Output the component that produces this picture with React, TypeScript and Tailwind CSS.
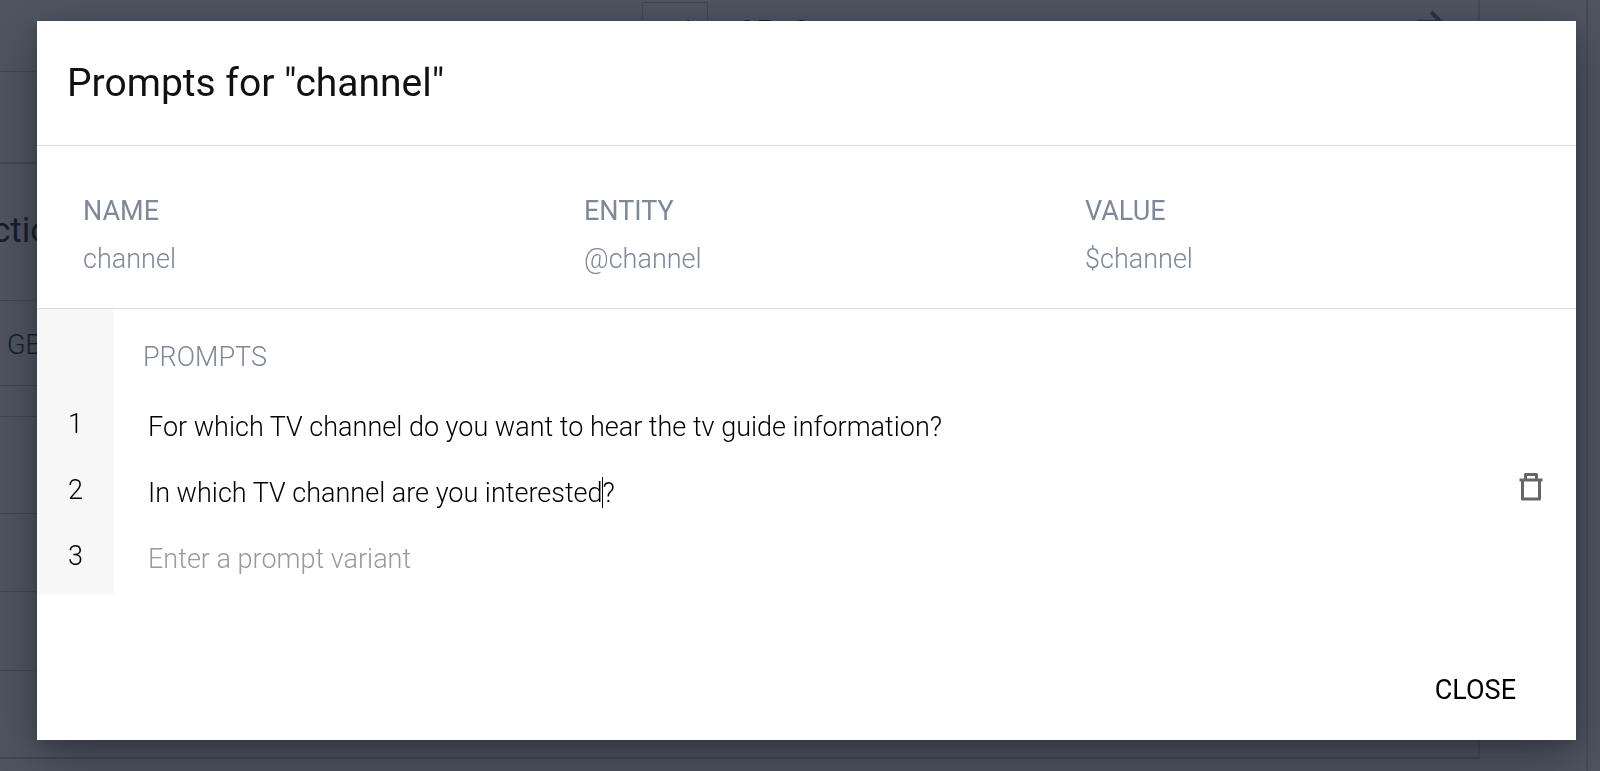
import { useState } from "react";

const details = [
  { label: "NAME", value: "channel" },
  { label: "ENTITY", value: "@channel" },
  { label: "VALUE", value: "$channel" },
];

function PageBehind() {
  return (
    <div aria-hidden="true" className="flex h-screen overflow-hidden bg-[#505661] text-[27px] leading-8 text-[#151d2e]">
      <div className="min-w-0 flex-1">
        <div className="border-r-2 border-[#464c57]">
          <div className="flex h-[72px] items-start border-b border-[#424853] pl-[30px]">
            <div className="flex flex-1 items-start justify-end">
              <div className="mt-[2px] h-[54px] w-[66px] border border-[#424853] pt-3 pr-3 text-right font-light">1</div>
            </div>
            <div className="flex flex-1 items-start pt-[15px] pl-[30px] font-light">
              <span className="flex gap-[22px]">
                <span>OF</span>
                <span>3</span>
              </span>
            </div>
            <div className="w-[62px] pt-2">
              <svg viewBox="0 0 30 26" className="h-[26px] w-[30px]" fill="none" stroke="#2c3542" strokeWidth="4">
                <path d="M1 14H27M15 4L25 14L15 24" />
              </svg>
            </div>
          </div>
          <div className="h-[92px] border-b-2 border-[#424853]" />
          <div className="flex h-[137px] items-center border-b border-[#424853] pb-[2px]">
            <span className="-ml-2 text-[35px] leading-10">ction</span>
          </div>
          <div className="flex h-[85px] items-center border-b border-[#424853] px-[7px] pt-1 font-light">GE</div>
          <div className="h-[31px] border-b border-[#424853]" />
          <div className="h-[97px] border-b border-[#424853]" />
          <div className="h-[78px] border-b border-[#424853]" />
          <div className="h-[79px] border-b border-[#424853]" />
          <div className="h-[88px] border-b-2 border-[#424853]" />
        </div>
      </div>
      <div className="w-[106px]" />
      <div className="w-[14px] border-l-2 border-[#464c57]" />
    </div>
  );
}

function TrashIcon() {
  return (
    <svg viewBox="0 0 24 28" className="h-7 w-6" fill="none" stroke="#666" strokeWidth="3" strokeLinejoin="round" aria-hidden="true">
      <path d="M0.5 7H23.5" />
      <path d="M6.5 7V1.5H17.5V7" />
      <path d="M3.5 7V26H20.5V7" />
    </svg>
  );
}

export default function App() {
  const [prompts, setPrompts] = useState([
    "For which TV channel do you want to hear the tv guide information?",
    "In which TV channel are you interested?",
    "",
  ]);

  const update = (index: number, text: string) =>
    setPrompts(prompts.map((prompt, i) => (i === index ? text : prompt)));

  return (
    <div className="font-[Roboto,sans-serif]">
      <PageBehind />
      <div className="fixed inset-0 overflow-hidden pt-[21px] pr-[24px] pl-[37px]">
        <div
          role="dialog"
          aria-labelledby="dialog-title"
          className="bg-white text-[27px] leading-8 text-black shadow-[0_16px_48px_rgba(20,24,36,0.5),0_4px_12px_rgba(20,24,36,0.15)]"
        >
          <header className="border-b border-[#d9d9d9] px-[30px] pt-[38px] pb-[38px]">
            <h2 id="dialog-title" className="text-[39px] leading-12 text-[#111]">
              Prompts for "channel"
            </h2>
          </header>

          <dl className="flex border-b border-[#d9d9d9] px-[18px] pt-[41px] pb-[25px] text-[#7e8896]">
            {details.map((item) => (
              <div key={item.label} className="flex-1 px-7 leading-12">
                <dt>{item.label}</dt>
                <dd className="font-light">{item.value}</dd>
              </div>
            ))}
          </dl>

          <div className="flex">
            <div className="w-[77px] bg-[#f7f7f7] pt-[82px] pb-[5px] text-center font-light">
              {prompts.map((_, i) => (
                <div key={i} className="flex h-[66px] items-center justify-center">
                  {i + 1}
                </div>
              ))}
            </div>
            <div className="min-w-0 flex-1 font-light">
              <h3 className="flex h-[82px] items-center pt-[14px] pl-[29px] text-[#7e8896]">PROMPTS</h3>
              {prompts.map((prompt, i) => (
                <div key={i} className="relative flex h-[66px] items-center pr-[33px] pl-[34px]">
                  <input
                    type="text"
                    aria-label={`Prompt ${i + 1}`}
                    value={prompt}
                    placeholder="Enter a prompt variant"
                    onChange={(event) => update(i, event.target.value)}
                    className="min-w-0 flex-1 bg-transparent pt-[6px] outline-none placeholder:text-[#999]"
                  />
                  {i === 1 && (
                    <>
                      <span aria-hidden="true" className="absolute top-5 left-[488px] h-[31px] w-px bg-black" />
                      <button type="button" aria-label="Delete prompt" className="pb-[6px]" onClick={() => update(i, "")}>
                        <TrashIcon />
                      </button>
                    </>
                  )}
                </div>
              ))}
            </div>
          </div>

          <footer className="flex justify-end pt-[78px] pr-[44px] pb-[32px]">
            <button type="button" className="px-4 py-[2px]">
              CLOSE
            </button>
          </footer>
        </div>
      </div>
    </div>
  );
}
